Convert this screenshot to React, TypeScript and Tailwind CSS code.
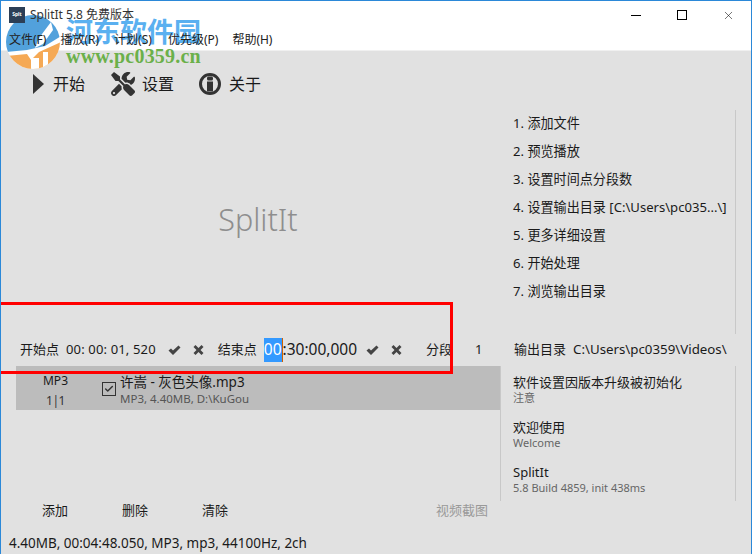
import { Check, X } from 'lucide-react';
import { FaTools } from 'react-icons/fa';

const FONT = "font-['Noto_Sans','Noto_Sans_CJK_SC',sans-serif]";

const STEPS = [
  '1. 添加文件',
  '2. 预览播放',
  '3. 设置时间点分段数',
  '4. 设置输出目录 [C:\\Users\\pc035...\\]',
  '5. 更多详细设置',
  '6. 开始处理',
  '7. 浏览输出目录',
];

const NOTES = [
  { title: '软件设置因版本升级被初始化', sub: '注意' },
  { title: '欢迎使用', sub: 'Welcome' },
  { title: 'SplitIt', sub: '5.8 Build 4859, init 438ms' },
];

function Marks() {
  return (
    <div className="flex items-center gap-[11px]">
      <svg width="13" height="12" viewBox="0 0 13 12">
        <path d="M0.5 6.5 L3 4.5 L5 6.5 L10.5 1.5 L12.5 3.5 L5 11 Z" fill="#444444" />
      </svg>
      <svg width="13" height="12" viewBox="0 0 13 12">
        <path d="M1.5 3 L3.5 1 L6.5 4 L9.5 1 L11.5 3 L8.5 6 L11.5 9 L9.5 11 L6.5 8 L3.5 11 L1.5 9 L4.5 6 Z" fill="#444444" />
      </svg>
    </div>
  );
}

function Watermark() {
  return (
    <div className="absolute left-[4px] top-[13px] flex gap-[5px] pointer-events-none">
      <svg width="56" height="56" viewBox="0 0 56 56">
        <defs>
          <clipPath id="logo"><circle cx="28" cy="28" r="27" /></clipPath>
        </defs>
        <g clipPath="url(#logo)">
          <rect x="0" y="0" width="56" height="56" fill="#ffffff" />
          <path d="M0 0 H56 V22 L40 32 L22 36 L0 38 Z" fill="#3f97d8" opacity="0.9" />
          <path d="M46 8 L34 24 L30 34 L38 30 L48 16 Z" fill="#ffffff" />
          <path d="M0 42 L22 40 L26 46 L34 38 L56 28 V56 H0 Z" fill="#f5a955" />
          <path d="M26 44 h8 v12 h-8z M38 38 h5 v18 h-5z" fill="#ffffff" />
        </g>
      </svg>
      <div className="flex flex-col">
        <span className="font-['Noto_Sans_CJK_SC',serif] font-bold text-[27px] leading-[33px] text-[#5ab0f0]">河东软件园</span>
        <span className="font-['Liberation_Serif',serif] font-bold text-[20px] leading-[18px] tracking-[0.2px] text-[#6bb04a]">www.pc0359.cn</span>
      </div>
    </div>
  );
}

export default function App() {
  return (
    <div className={`${FONT} relative w-[752px] h-[554px] overflow-hidden flex flex-col bg-[#e1e1e1] border border-b-0 border-[#2b88d8] text-[13px] text-[#1a1a1a]`}>
      {/* Title bar + menu */}
      <div className="h-[50px] bg-white border-b border-[#f0f0f0] flex flex-col shrink-0">
        <div className="relative z-10 h-[30px] flex items-center">
          <div className="ml-[8px] w-[16px] h-[16px] bg-[#2c3f56] text-white text-[5px] font-bold flex items-center justify-center">Splt</div>
          <span className="ml-[5px] text-[12px] text-[#333333]">SplitIt 5.8 免费版本</span>
          <div className="ml-auto flex items-center">
            <div className="w-[46px] flex justify-center"><div className="w-[10px] h-px bg-black" /></div>
            <div className="w-[46px] flex justify-center"><div className="w-[10px] h-[10px] border border-black" /></div>
            <div className="w-[46px] flex justify-center"><X size={13} strokeWidth={1} color="#000" /></div>
          </div>
        </div>
        <div className="relative z-10 flex pl-[8px] pt-[1px] text-[12px] leading-[20px] text-[#222222]">
          <span>文件(F)</span>
          <span className="ml-[14px]">播放(R)</span>
          <span className="ml-[15px]">计划(S)</span>
          <span className="ml-[16px]">优先级(P)</span>
          <span className="ml-[14px]">帮助(H)</span>
        </div>
      </div>

      {/* Toolbar */}
      <div className="h-[50px] flex items-end pb-[5px] pl-[31px] text-[16px] shrink-0">
        <div className="flex items-center gap-[9px]">
          <svg width="12" height="20" viewBox="0 0 12 20"><path d="M1 0 L12 10 L1 20Z" fill="#333" /></svg>
          <span>开始</span>
        </div>
        <div className="ml-[26px] flex items-center gap-[7px]">
          <FaTools size={24} color="#333" />
          <span>设置</span>
        </div>
        <div className="ml-[25px] flex items-center gap-[8px]">
          <svg width="22" height="22" viewBox="0 0 22 22">
            <circle cx="11" cy="11" r="9.5" fill="none" stroke="#333" strokeWidth="3" />
            <rect x="8" y="3.5" width="6" height="4" rx="1.5" fill="#333" />
            <rect x="8" y="8.5" width="6" height="10" fill="#333" />
          </svg>
          <span>关于</span>
        </div>
      </div>

      {/* Player and steps */}
      <div className="flex h-[233px] shrink-0">
        <div className="w-[500px] flex items-center justify-center pt-[4px] pl-[14px] text-[30.5px] font-light text-[#8e8e8e]">SplitIt</div>
        <div className="w-[235px] h-[224px] mt-[9px] border-r border-[#c8c8c8] pl-[12px] text-[13.1px]">
          {STEPS.map(s => (
            <div key={s} className="h-[28px] leading-[26px] whitespace-nowrap">{s}</div>
          ))}
        </div>
      </div>

      {/* Cut points */}
      <div className="h-[32px] flex items-center shrink-0 whitespace-nowrap">
        <span className="ml-[19px]">开始点</span>
        <span className="ml-[7px] tracking-[0.15px]">00: 00: 01, 520</span>
        <div className="ml-[12px]"><Marks /></div>
        <span className="ml-[13px]">结束点</span>
        <span className="ml-[7px] text-[15.5px] flex items-center">
          <span className="bg-[#3399ff] text-white border-r border-[#d06000]">00</span>:30:00,000
        </span>
        <div className="ml-[9px]"><Marks /></div>
        <span className="ml-[23px]">分段</span>
        <span className="ml-[23px]">1</span>
        <span className="absolute left-[513px]">输出目录</span>
        <span className="absolute left-[572px] text-[13.3px]">C:\Users\pc0359\Videos\</span>
      </div>

      {/* List and notes */}
      <div className="flex h-[135px] shrink-0">
        <div className="w-[500px] pl-[15px] border-r border-[#c8c8c8]">
          <div className="h-[44px] bg-[#bcbcbc] flex">
            <div className="w-[80px] flex flex-col items-center text-[12px] leading-[20px] pt-[5px] pr-[1px]">
              <span>MP3</span>
              <span className="text-[#333] tracking-[-0.5px]">1|1</span>
            </div>
            <div className="ml-[6px] mt-[16px] w-[14px] h-[14px] border border-[#333] flex items-center justify-center">
              <Check size={10} strokeWidth={3.5} color="#333" />
            </div>
            <div className="ml-[4px] flex flex-col pt-[7px]">
              <span className="text-[13.5px] leading-[18px]">许嵩 - 灰色头像.mp3</span>
              <span className="text-[11.5px] leading-[15px] text-[#555555]">MP3, 4.40MB, D:\KuGou</span>
            </div>
          </div>
        </div>
        <div className="w-[235px] border-r border-[#c8c8c8] pl-[12px]">
          {NOTES.map(n => (
            <div key={n.title} className="h-[45px] pt-[7px]">
              <div className="text-[13px] leading-[18px]">{n.title}</div>
              <div className="text-[11px] leading-[14px] text-[#666666]">{n.sub}</div>
            </div>
          ))}
        </div>
      </div>

      {/* Bottom buttons */}
      <div className="h-[30px] flex items-center pl-[41px] pr-[13px] pb-[10px] w-[500px] shrink-0">
        <span>添加</span>
        <span className="ml-[54px]">删除</span>
        <span className="ml-[54px]">清除</span>
        <span className="ml-auto text-[#999999]">视频截图</span>
      </div>

      {/* Status */}
      <div className="h-[24px] flex items-center pl-[8px] text-[13.5px] shrink-0">4.40MB, 00:04:48.050, MP3, mp3, 44100Hz, 2ch</div>

      <Watermark />
      <div className="absolute left-[-5px] top-[301px] w-[457px] h-[72px] border-[3px] border-[#ff0000]" />
    </div>
  );
}
